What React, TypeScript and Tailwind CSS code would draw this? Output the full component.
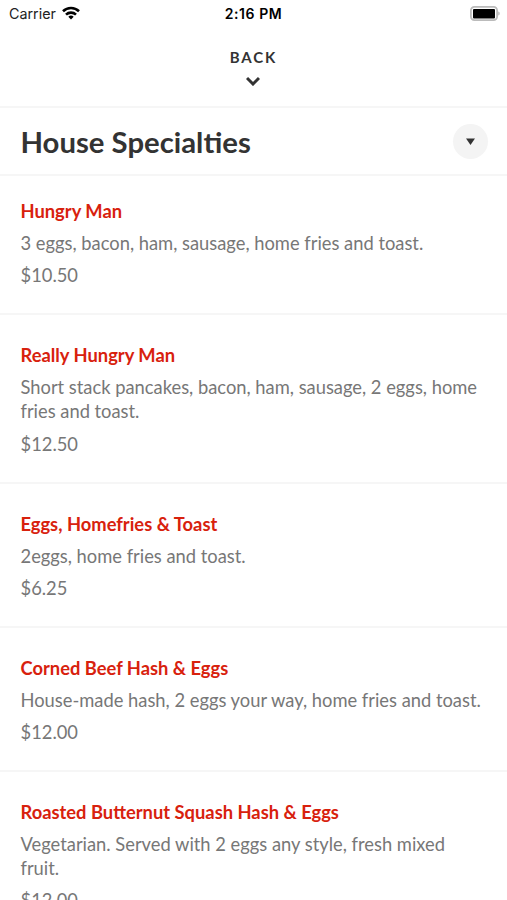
import React from 'react'

interface MenuItem {
  name: string
  description: string
  price: string
}

const items: MenuItem[] = [
  { name: 'Hungry Man', description: '3 eggs, bacon, ham, sausage, home fries and toast.', price: '$10.50' },
  { name: 'Really Hungry Man', description: 'Short stack pancakes, bacon, ham, sausage, 2 eggs, home fries and toast.', price: '$12.50' },
  { name: 'Eggs, Homefries & Toast', description: '2eggs, home fries and toast.', price: '$6.25' },
  { name: 'Corned Beef Hash & Eggs', description: 'House-made hash, 2 eggs your way, home fries and toast.', price: '$12.00' },
  { name: 'Roasted Butternut Squash Hash & Eggs', description: 'Vegetarian. Served with 2 eggs any style, fresh mixed fruit.', price: '$12.00' },
]

const StatusBar: React.FC = () => (
  <div className="grid h-[27px] grid-cols-3 items-center pl-[9px] pr-[7px] font-['Inter',sans-serif] text-[14px] text-black">
    <div className="flex items-center gap-[6px]">
      <span className="text-[14.3px] text-[#222]">Carrier</span>
      <svg className="-mt-px h-[14px] w-[18px]" viewBox="0 0 18 14" fill="none" stroke="black" strokeWidth="2.6">
        <path d="M1 5.2a11.5 11.5 0 0 1 16 0" />
        <path d="M4 8.6a7.2 7.2 0 0 1 10 0" />
        <path d="M9 13.5 6.3 10.8a3.9 3.9 0 0 1 5.4 0Z" fill="black" stroke="none" />
      </svg>
    </div>
    <span className="-ml-[2px] text-center font-semibold tracking-[0.55px]">2:16 PM</span>
    <svg className="-mt-px h-[15px] w-[30px] justify-self-end" viewBox="0 0 30 15">
      <rect x="0.9" y="0.9" width="26.2" height="13.2" rx="3.5" fill="#fff" stroke="#bbb" strokeWidth="1.8" />
      <rect x="3" y="3" width="22" height="9.5" rx="1" fill="black" />
      <path d="M28.3 5.5v4c1.8-.6 1.8-3.4 0-4Z" fill="#b0b0b0" />
    </svg>
  </div>
)

const MenuRow: React.FC<{ item: MenuItem }> = ({ item }) => (
  <li className="border-b-2 border-[#f6f6f6] pt-[28px] pr-[21px] pb-[25.6px] pl-[20.5px] text-[18.33px] leading-[24.5px] first:pt-[23px]">
    <h2 className="font-bold text-[#d8210d]">{item.name}</h2>
    <p className="mt-[7.4px]">{item.description}</p>
    <p className="mt-[7.6px]">{item.price}</p>
  </li>
)

export default function App() {
  return (
    <div className="h-[900px] w-[507px] overflow-hidden bg-white font-['Lato',sans-serif] text-[#777]">
      <StatusBar />

      {/* Back */}
      <header className="flex h-[81px] flex-col items-center border-b-2 border-[#f6f6f6] pt-[20px] text-[#333]">
        <button className="flex flex-col items-center">
          <span className="text-[15px] leading-[20px] font-bold tracking-[1.9px]">BACK</span>
          <svg className="mt-[9px] h-[10px] w-[14px]" viewBox="0 0 14 10" fill="none" stroke="currentColor" strokeWidth="3">
            <path d="m1 2 6 6 6-6" />
          </svg>
        </button>
      </header>

      {/* Section heading */}
      <div className="flex h-[68px] items-center justify-between border-b-2 border-[#f6f6f6] pr-[19px] pl-[20.5px]">
        <h1 className="pt-[2px] text-[29.3px] font-bold text-[#333]">House Specialties</h1>
        <button className="flex size-[35px] items-center justify-center rounded-full bg-[#f4f4f4]">
          <svg className="h-[7px] w-[9px]" viewBox="0 0 9 7" fill="#333">
            <path d="M0 .5h9L4.5 7Z" />
          </svg>
        </button>
      </div>

      <ul>
        {items.map((item) => (
          <MenuRow key={item.name} item={item} />
        ))}
      </ul>
    </div>
  )
}
